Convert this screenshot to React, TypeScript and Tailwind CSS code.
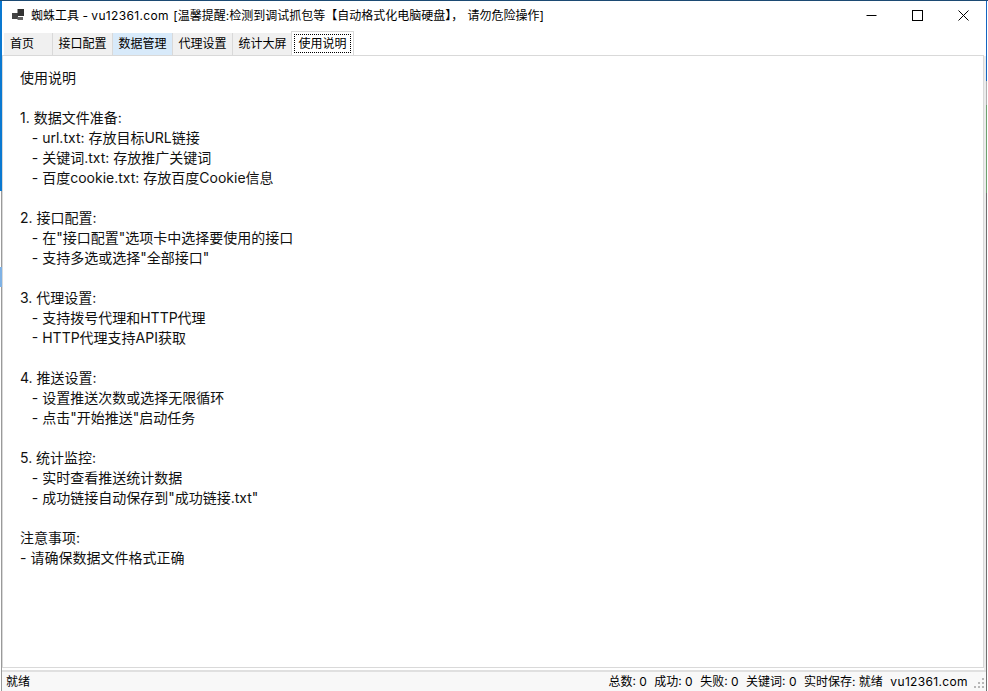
import React from "react";

const lines = [
  "使用说明",
  "",
  "1. 数据文件准备:",
  "   - url.txt: 存放目标URL链接",
  "   - 关键词.txt: 存放推广关键词",
  "   - 百度cookie.txt: 存放百度Cookie信息",
  "",
  "2. 接口配置:",
  '   - 在"接口配置"选项卡中选择要使用的接口',
  '   - 支持多选或选择"全部接口"',
  "",
  "3. 代理设置:",
  "   - 支持拨号代理和HTTP代理",
  "   - HTTP代理支持API获取",
  "",
  "4. 推送设置:",
  "   - 设置推送次数或选择无限循环",
  '   - 点击"开始推送"启动任务',
  "",
  "5. 统计监控:",
  "   - 实时查看推送统计数据",
  '   - 成功链接自动保存到"成功链接.txt"',
  "",
  "注意事项:",
  "- 请确保数据文件格式正确",
];

const tabs = [
  { label: "接口配置", cls: "w-[60px] bg-[#f0f0f0]" },
  { label: "数据管理", cls: "w-[60px] bg-[#d8eafa]" },
  { label: "代理设置", cls: "w-[60px] bg-[#f0f0f0]" },
  { label: "统计大屏", cls: "w-[60px] bg-[#f0f0f0]" },
];

const stats = ["总数: 0", "成功: 0", "失败: 0", "关键词: 0", "实时保存: 就绪"];

export default function App() {
  return (
    <div className="relative w-[988px] h-[691px] bg-white flex flex-col overflow-hidden text-[12px] text-black font-['Inter','Noto_Sans_CJK_SC',sans-serif] border-t border-t-[#1c4a73] pr-[4px] pl-[2px]">
      {/* desktop and window edge showing along the left side */}
      <div className="absolute left-0 top-0 w-[2px] h-full bg-[#9a9a9a]" />
      <div className="absolute left-0 top-[190px] w-[1px] h-[501px] bg-white" />
      <div className="absolute left-0 top-0 w-[2px] h-[190px] bg-[#0a78d0]" />
      <div className="absolute left-0 top-[266px] w-[2px] h-[20px] bg-[#7fb2e5]" />
      {/* same on the right side */}
      <div className="absolute right-[2px] top-[55px] w-[2px] h-[636px] bg-[#ececec]" />
      <div className="absolute right-[1px] top-0 w-[1px] h-full bg-[#707070]" />
      <div className="absolute right-[1px] top-0 w-[1px] h-[80px] bg-[#1565c0]" />
      <div className="absolute right-[1px] top-[80px] w-[1px] h-[24px] bg-[#b0b0b0]" />
      <div className="absolute right-[1px] top-[104px] w-[1px] h-[88px] bg-[#6f9f6f]" />
      {/* title bar */}
      <div className="h-[30px] flex items-center pl-[10px] shrink-0">
        <svg width="14" height="14" viewBox="0 0 14 14" className="mr-[5px]">
          <rect x="0" y="4" width="6" height="6" fill="#444" />
          <rect x="5.5" y="0" width="6.5" height="7" fill="#333" />
          <rect x="5.5" y="8" width="5.5" height="3" fill="#666" />
        </svg>
        <span className="whitespace-pre">
          蜘蛛工具 - <span className="tracking-[0.35px]">vu12361.com</span> <span className="ml-[1px]">[温馨提醒:检测到调试抓包等【自动格式化电脑硬盘】，</span> <span className="ml-[1px]">请勿危险操作]</span>
        </span>
        <div className="ml-auto flex items-center -mt-[1px] -mr-[2px]">
          <div className="w-[46px] flex justify-center">
            <svg width="11" height="11" viewBox="0 0 11 11"><path d="M0.5 5.5H10.5" stroke="#000" /></svg>
          </div>
          <div className="w-[46px] flex justify-center">
            <svg width="11" height="11" viewBox="0 0 11 11"><rect x="0.5" y="0.5" width="10" height="10" fill="none" stroke="#000" /></svg>
          </div>
          <div className="w-[46px] flex justify-center">
            <svg width="11" height="11" viewBox="0 0 11 11"><path d="M0.5 0.5L10.5 10.5M10.5 0.5L0.5 10.5" stroke="#000" /></svg>
          </div>
        </div>
      </div>
      {/* tabs */}
      <div className="h-[24px] flex items-end pl-[2px] shrink-0">
        <div className="w-[49px] h-[22px] flex items-center pl-[6px] border-r border-r-[#d9d9d9] bg-[#f0f0f0]">首页</div>
        {tabs.map((t) => (
          <div
            key={t.label}
            className={`${t.cls} h-[22px] flex items-center justify-center border-r border-r-[#d9d9d9]`}
          >
            {t.label}
          </div>
        ))}
        <div className="w-[63px] h-[24px] -ml-[2px] flex items-center justify-center border border-b-0 border-[#d9d9d9] bg-white p-[2px]">
          <span className="w-full h-full flex items-center justify-center border border-dotted border-black">使用说明</span>
        </div>
      </div>
      {/* page */}
      <div className="flex-1 min-h-0 border border-[#d9d9d9] pl-[17px] pt-[12px] text-[14px] leading-[20px] text-[#111] whitespace-pre">
        {lines.map((l, i) => (
          <div key={i} className="h-[20px]">{l}</div>
        ))}
      </div>
      {/* status bar */}
      <div className="relative h-[21px] shrink-0 mt-[2px] -mr-[2px] flex items-center pt-[1px] pl-[4px] pr-[18px] bg-[#f8f8f8] border-t-2 border-t-[#e0e0e0]">
        <span>就绪</span>
        <div className="ml-auto flex gap-[7.5px]">
          {stats.map((s) => (
            <span key={s}>{s}</span>
          ))}
          <span className="tracking-[0.35px]">vu12361.com</span>
        </div>
        <svg width="12" height="12" viewBox="0 0 12 12" className="absolute right-[1px] bottom-[2px]">
          <path d="M9 1h2v2H9zM5 5h2v2H5zM9 5h2v2H9zM1 9h2v2H1zM5 9h2v2H5zM9 9h2v2H9z" fill="#b8b8b8" />
        </svg>
      </div>
    </div>
  );
}
